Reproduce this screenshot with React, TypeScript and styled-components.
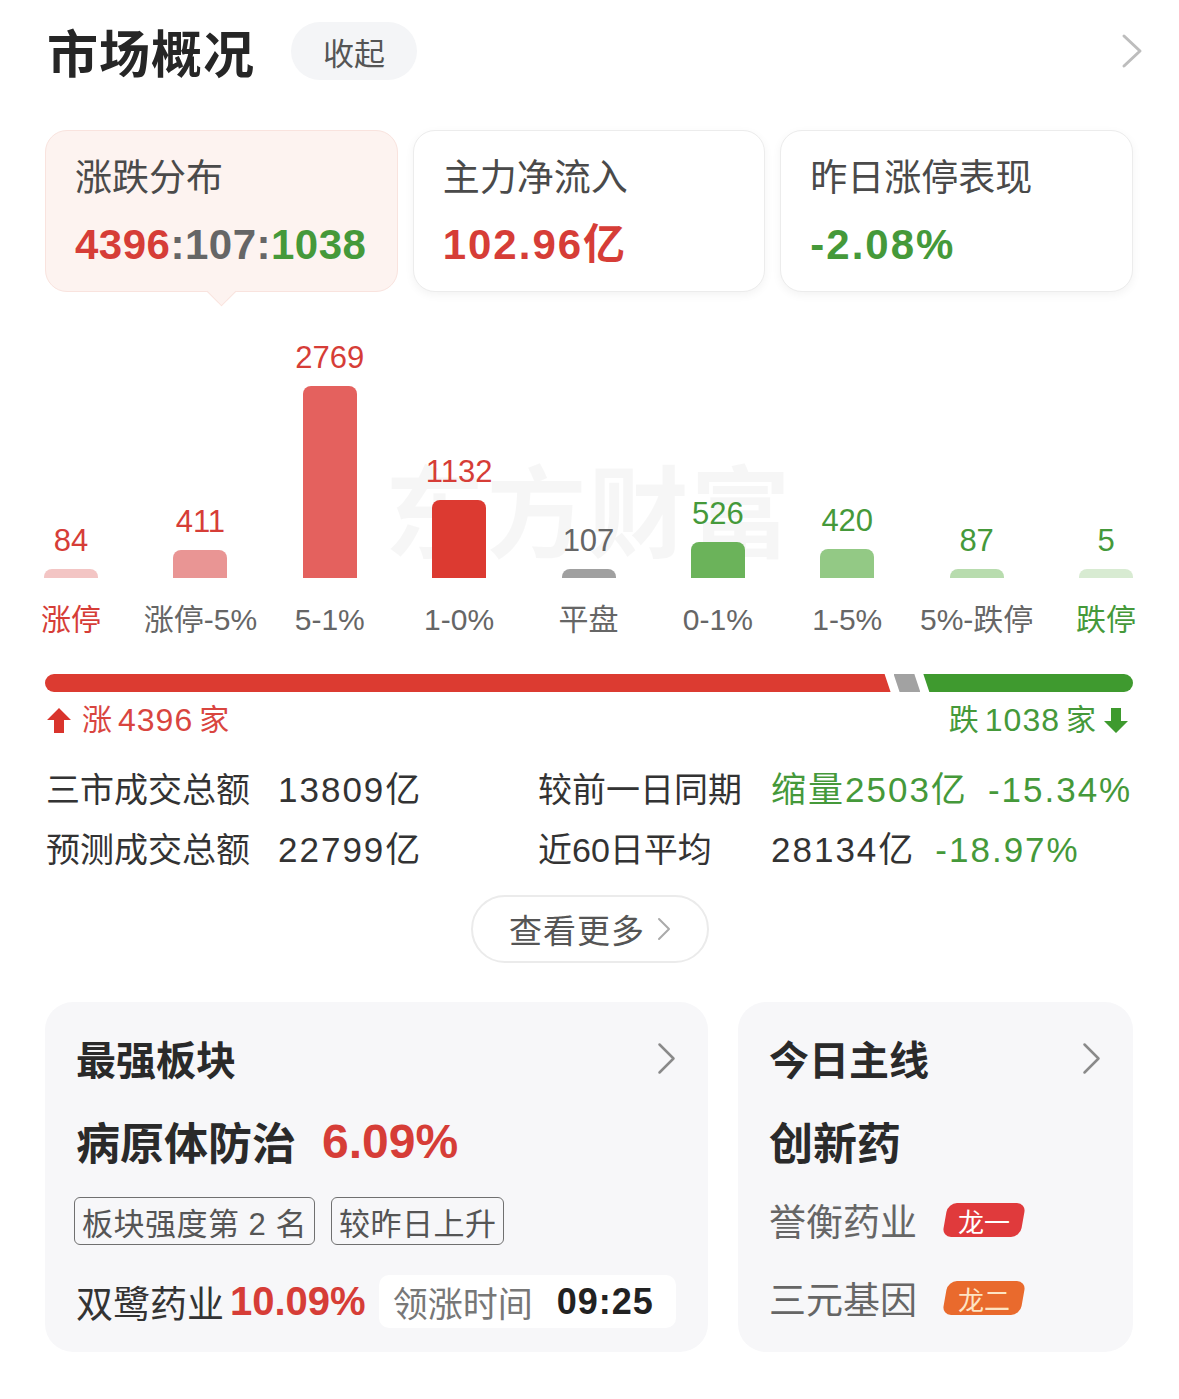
import React from 'react';
import styled, { createGlobalStyle, css } from 'styled-components';

const GlobalStyle = createGlobalStyle`
  body {
    margin: 0;
    background: #ffffff;
    font-family: "Liberation Sans", "Noto Sans CJK SC", sans-serif;
    color: #333333;
  }
`;

type Tone = 'up' | 'flat' | 'down';

interface BarItem {
  value: number;
  label: string;
  color: string;
  tone: Tone;
  strongLabel?: boolean;
}

const BARS: BarItem[] = [
  { value: 84, label: '涨停', color: '#f3c5c4', tone: 'up', strongLabel: true },
  { value: 411, label: '涨停-5%', color: '#e99594', tone: 'up' },
  { value: 2769, label: '5-1%', color: '#e4615e', tone: 'up' },
  { value: 1132, label: '1-0%', color: '#dc3a31', tone: 'up' },
  { value: 107, label: '平盘', color: '#a0a0a0', tone: 'flat' },
  { value: 526, label: '0-1%', color: '#6bb35a', tone: 'down' },
  { value: 420, label: '1-5%', color: '#93c985', tone: 'down' },
  { value: 87, label: '5%-跌停', color: '#b8dcae', tone: 'down' },
  { value: 5, label: '跌停', color: '#d8ebd2', tone: 'down', strongLabel: true },
];

const RED = '#d63d37';
const GREEN = '#45993a';
const MAX_BAR = 192;

const toneColor = (t: Tone) => (t === 'up' ? RED : t === 'down' ? GREEN : '#666666');

const Chevron: React.FC<{ w: number; h: number; color: string; stroke: number }> = ({ w, h, color, stroke }) => (
  <svg width={w} height={h} viewBox={`0 0 ${w} ${h}`} fill="none">
    <path
      d={`M${stroke} ${stroke} L${w - stroke} ${h / 2} L${stroke} ${h - stroke}`}
      stroke={color}
      strokeWidth={stroke}
      strokeLinecap="round"
      strokeLinejoin="round"
    />
  </svg>
);

const UpArrow = () => (
  <svg width="26" height="27" viewBox="0 0 26 27">
    <path d="M13 1 L25 13 L18 13 L18 26 L8 26 L8 13 L1 13 Z" fill="#d9342c" />
  </svg>
);

const DownArrow = () => (
  <svg width="26" height="27" viewBox="0 0 26 27">
    <path d="M8 1 L18 1 L18 14 L25 14 L13 26 L1 14 L8 14 Z" fill="#3e9a2e" />
  </svg>
);

const App: React.FC = () => {
  const up = 4396;
  const flat = 107;
  const down = 1038;

  return (
    <Page>
      <GlobalStyle />
      <Header>
        <Title>市场概况</Title>
        <CollapsePill>收起</CollapsePill>
        <HeaderSpacer />
        <Chevron w={22} h={36} color="#bdbdbd" stroke={3} />
      </Header>

      <TabRow>
        <TabCard $active>
          <TabLabel>涨跌分布</TabLabel>
          <TabValue>
            <Colored $c={RED}>4396</Colored>
            <Colored $c="#666666">:107:</Colored>
            <Colored $c={GREEN}>1038</Colored>
          </TabValue>
        </TabCard>
        <TabCard>
          <TabLabel>主力净流入</TabLabel>
          <TabValue $wide>
            <Colored $c={RED}>102.96亿</Colored>
          </TabValue>
        </TabCard>
        <TabCard>
          <TabLabel>昨日涨停表现</TabLabel>
          <TabValue $wide>
            <Colored $c={GREEN}>-2.08%</Colored>
          </TabValue>
        </TabCard>
      </TabRow>

      <Chart>
        <Watermark aria-hidden>东方财富</Watermark>
        {BARS.map((b) => (
          <Column key={b.label}>
            <BarValue $c={toneColor(b.tone)}>{b.value}</BarValue>
            <Bar
              $color={b.color}
              style={{ height: Math.max(9, Math.round((b.value / 2769) * MAX_BAR)) }}
            />
          </Column>
        ))}
      </Chart>
      <LabelRow>
        {BARS.map((b) => (
          <CategoryLabel key={b.label} $c={b.strongLabel ? toneColor(b.tone) : '#666666'}>
            {b.label}
          </CategoryLabel>
        ))}
      </LabelRow>

      <Track>
        <Segment $kind="up" style={{ flexGrow: up }} />
        <Segment $kind="flat" style={{ flexGrow: flat * 1.3 }} />
        <Segment $kind="down" style={{ flexGrow: down * 1.05 }} />
      </Track>
      <CountRow>
        <Count $c="#d9453f">
          <UpArrow />
          <span>涨</span>
          <CountNum>4396</CountNum>
          <span>家</span>
        </Count>
        <Count $c={GREEN}>
          <span>跌</span>
          <CountNum>1038</CountNum>
          <span>家</span>
          <DownArrow />
        </Count>
      </CountRow>

      <Stats>
        <StatLabel>三市成交总额</StatLabel>
        <StatValue>13809亿</StatValue>
        <StatLabel>较前一日同期</StatLabel>
        <StatValue $c={GREEN}>
          缩量2503亿<StatGap />-15.34%
        </StatValue>
        <StatLabel>预测成交总额</StatLabel>
        <StatValue>22799亿</StatValue>
        <StatLabel>近60日平均</StatLabel>
        <StatValue>
          28134亿<StatGap />
          <Colored $c={GREEN}>-18.97%</Colored>
        </StatValue>
      </Stats>

      <MoreWrap>
        <MoreButton>
          查看更多
          <Chevron w={14} h={24} color="#aaaaaa" stroke={2} />
        </MoreButton>
      </MoreWrap>

      <BottomRow>
        <Panel>
          <PanelHead>
            <PanelTitle>最强板块</PanelTitle>
            <Chevron w={19} h={33} color="#8a8a8a" stroke={2.5} />
          </PanelHead>
          <Headline>
            病原体防治<HeadlinePct>6.09%</HeadlinePct>
          </Headline>
          <TagRow>
            <Tag>板块强度第 2 名</Tag>
            <Tag>较昨日上升</Tag>
          </TagRow>
          <LeadRow>
            <LeadName>双鹭药业</LeadName>
            <LeadPct>10.09%</LeadPct>
            <TimeBox>
              <TimeLabel>领涨时间</TimeLabel>
              <TimeValue>09:25</TimeValue>
            </TimeBox>
          </LeadRow>
        </Panel>
        <Panel>
          <PanelHead>
            <PanelTitle>今日主线</PanelTitle>
            <Chevron w={19} h={33} color="#8a8a8a" stroke={2.5} />
          </PanelHead>
          <Headline>创新药</Headline>
          <StockRow $first>
            <StockName>誉衡药业</StockName>
            <Badge $bg="#e03a3c" $fg="#ffffff">
              <span>龙一</span>
            </Badge>
          </StockRow>
          <StockRow>
            <StockName>三元基因</StockName>
            <Badge $bg="#e96a2d" $fg="#fde4c4">
              <span>龙二</span>
            </Badge>
          </StockRow>
        </Panel>
      </BottomRow>
    </Page>
  );
};

const Page = styled.div`
  width: 1179px;
  box-sizing: border-box;
  padding: 22px 46px 40px 45px;
`;

const Header = styled.div`
  display: flex;
  align-items: center;
  height: 58px;
  margin-right: -10px;
`;

const Title = styled.div`
  font-size: 51px;
  font-weight: 700;
  color: #262626;
  letter-spacing: 1px;
  margin-left: 2px;
`;

const CollapsePill = styled.div`
  margin-left: 36px;
  height: 58px;
  padding: 0 32px;
  border-radius: 29px;
  background: #f4f5f7;
  display: flex;
  align-items: center;
  font-size: 31px;
  color: #555555;
`;

const HeaderSpacer = styled.div`
  flex: 1;
`;

const TabRow = styled.div`
  display: grid;
  grid-template-columns: repeat(3, 1fr);
  gap: 15px;
  margin-top: 50px;
`;

const TabCard = styled.div<{ $active?: boolean }>`
  position: relative;
  min-width: 0;
  height: 162px;
  box-sizing: border-box;
  padding: 24px 29px;
  border-radius: 22px;
  background: #ffffff;
  border: 1.5px solid #ececec;
  box-shadow: 0 3px 10px rgba(0, 0, 0, 0.05);
  ${(p) =>
    p.$active &&
    css`
      background: #fdf3f0;
      border-color: #f9e3de;
      box-shadow: none;
      &::after {
        content: '';
        position: absolute;
        left: 50%;
        bottom: -11px;
        width: 20px;
        height: 20px;
        margin-left: -10px;
        background: #fdf3f0;
        border-right: 1.5px solid #f9e3de;
        border-bottom: 1.5px solid #f9e3de;
        transform: rotate(45deg);
      }
    `}
`;

const TabLabel = styled.div`
  font-size: 37px;
  line-height: 48px;
  color: #4a4a4a;
  white-space: nowrap;
`;

const TabValue = styled.div<{ $wide?: boolean }>`
  margin-top: 16px;
  font-size: 42px;
  line-height: 52px;
  font-weight: 700;
  white-space: nowrap;
  letter-spacing: ${(p) => (p.$wide ? '2px' : '0.5px')};
`;

const Colored = styled.span<{ $c: string }>`
  color: ${(p) => p.$c};
`;

const Chart = styled.div`
  position: relative;
  margin: 38px -2px 0 -3px;
  height: 248px;
  display: flex;
  justify-content: space-between;
  align-items: flex-end;
`;

const Watermark = styled.div`
  position: absolute;
  left: 50%;
  top: 130px;
  transform: translateX(-50%);
  font-size: 100px;
  line-height: 110px;
  font-weight: 700;
  letter-spacing: 2px;
  color: rgba(0, 0, 0, 0.035);
  white-space: nowrap;
  pointer-events: none;
  z-index: 0;
`;

const Column = styled.div`
  position: relative;
  z-index: 1;
  width: 58px;
  display: flex;
  flex-direction: column;
  align-items: center;
  justify-content: flex-end;
`;

const BarValue = styled.div<{ $c: string }>`
  font-size: 31px;
  line-height: 36px;
  margin-bottom: 10px;
  color: ${(p) => p.$c};
  white-space: nowrap;
`;

const Bar = styled.div<{ $color: string }>`
  width: 54px;
  border-radius: 8px 8px 0 0;
  background: ${(p) => p.$color};
`;

const LabelRow = styled.div`
  margin: 22px -2px 0 -3px;
  display: flex;
  justify-content: space-between;
`;

const CategoryLabel = styled.div<{ $c: string }>`
  width: 58px;
  display: flex;
  justify-content: center;
  white-space: nowrap;
  font-size: 30px;
  line-height: 40px;
  color: ${(p) => p.$c};
`;

const Track = styled.div`
  margin-top: 34px;
  height: 18px;
  display: flex;
  gap: 3px;
`;

const Segment = styled.div<{ $kind: Tone }>`
  flex-basis: 0;
  flex-shrink: 1;
  ${(p) =>
    p.$kind === 'up' &&
    css`
      background: #dc3b31;
      border-radius: 9px 0 0 9px;
      clip-path: polygon(0 0, calc(100% - 6px) 0, 100% 100%, 0 100%);
    `}
  ${(p) =>
    p.$kind === 'flat' &&
    css`
      background: #a2a2a2;
      clip-path: polygon(0 0, calc(100% - 6px) 0, 100% 100%, 6px 100%);
    `}
  ${(p) =>
    p.$kind === 'down' &&
    css`
      background: #3f9a2f;
      border-radius: 0 9px 9px 0;
      clip-path: polygon(0 0, 100% 0, 100% 100%, 6px 100%);
    `}
`;

const CountRow = styled.div`
  margin-top: 8px;
  display: flex;
  justify-content: space-between;
`;

const Count = styled.div<{ $c: string }>`
  display: flex;
  align-items: center;
  gap: 6px;
  font-size: 30px;
  line-height: 40px;
  color: ${(p) => p.$c};
  svg {
    margin: 0 4px 0 1px;
  }
`;

const CountNum = styled.span`
  font-size: 32px;
  letter-spacing: 1px;
`;

const Stats = styled.div`
  margin-top: 25px;
  display: grid;
  grid-template-columns: 232px 260px 233px 1fr;
  row-gap: 10px;
  padding-left: 1px;
`;

const StatLabel = styled.div`
  font-size: 34px;
  line-height: 50px;
  color: #333333;
  white-space: nowrap;
`;

const StatValue = styled.div<{ $c?: string }>`
  font-size: 35px;
  line-height: 50px;
  color: ${(p) => p.$c ?? '#333333'};
  white-space: nowrap;
  letter-spacing: 2px;
`;

const StatGap = styled.span`
  display: inline-block;
  width: 20px;
`;

const MoreWrap = styled.div`
  margin-top: 20px;
  display: flex;
  justify-content: center;
  padding-left: 2px;
`;

const MoreButton = styled.div`
  height: 68px;
  box-sizing: border-box;
  padding: 0 36px;
  border: 2px solid #ebebeb;
  border-radius: 34px;
  display: flex;
  align-items: center;
  gap: 12px;
  font-size: 33px;
  letter-spacing: 1px;
  color: #555555;
`;

const BottomRow = styled.div`
  margin-top: 39px;
  display: grid;
  grid-template-columns: 663px 1fr;
  gap: 30px;
`;

const Panel = styled.div`
  min-width: 0;
  height: 350px;
  box-sizing: border-box;
  padding: 31px 32px 0 31px;
  border-radius: 28px;
  background: #f7f7f9;
`;

const PanelHead = styled.div`
  display: flex;
  align-items: center;
  justify-content: space-between;
  height: 50px;
`;

const PanelTitle = styled.div`
  font-size: 40px;
  font-weight: 700;
  color: #2a2a2a;
`;

const Headline = styled.div`
  margin-top: 30px;
  height: 56px;
  display: flex;
  align-items: center;
  font-size: 44px;
  font-weight: 700;
  color: #2a2a2a;
`;

const HeadlinePct = styled.span`
  margin-left: 26px;
  color: ${RED};
  font-size: 48px;
`;

const TagRow = styled.div`
  margin-top: 28px;
  display: flex;
  gap: 16px;
  margin-left: -2px;
`;

const Tag = styled.div`
  height: 48px;
  box-sizing: border-box;
  padding: 0 7px;
  border: 1.5px solid #707070;
  border-radius: 6px;
  display: flex;
  align-items: center;
  font-size: 31px;
  letter-spacing: 0.5px;
  color: #555555;
  white-space: pre;
`;

const LeadRow = styled.div`
  margin-top: 30px;
  display: flex;
  align-items: center;
  height: 53px;
`;

const LeadName = styled.span`
  font-size: 37px;
  color: #333333;
`;

const LeadPct = styled.span`
  margin-left: 6px;
  font-size: 40px;
  font-weight: 700;
  color: ${RED};
`;

const TimeBox = styled.div`
  margin-left: 13px;
  flex: 1;
  height: 53px;
  box-sizing: border-box;
  padding: 0 14px;
  border-radius: 10px;
  background: #ffffff;
  display: flex;
  align-items: center;
`;

const TimeLabel = styled.span`
  font-size: 35px;
  color: #777777;
`;

const TimeValue = styled.span`
  margin-left: 24px;
  font-size: 36px;
  font-weight: 700;
  color: #222222;
  letter-spacing: 1px;
`;

const StockRow = styled.div<{ $first?: boolean }>`
  margin-top: ${(p) => (p.$first ? '27px' : '30px')};
  height: 48px;
  display: flex;
  align-items: center;
`;

const StockName = styled.span`
  font-size: 37px;
  color: #666666;
`;

const Badge = styled.div<{ $bg: string; $fg: string }>`
  margin-left: 28px;
  height: 34px;
  padding: 0 13px;
  border-radius: 9px;
  background: ${(p) => p.$bg};
  transform: skewX(-10deg);
  display: flex;
  align-items: center;
  span {
    display: block;
    transform: skewX(10deg);
    font-size: 26px;
    color: ${(p) => p.$fg};
  }
`;

export default App;
